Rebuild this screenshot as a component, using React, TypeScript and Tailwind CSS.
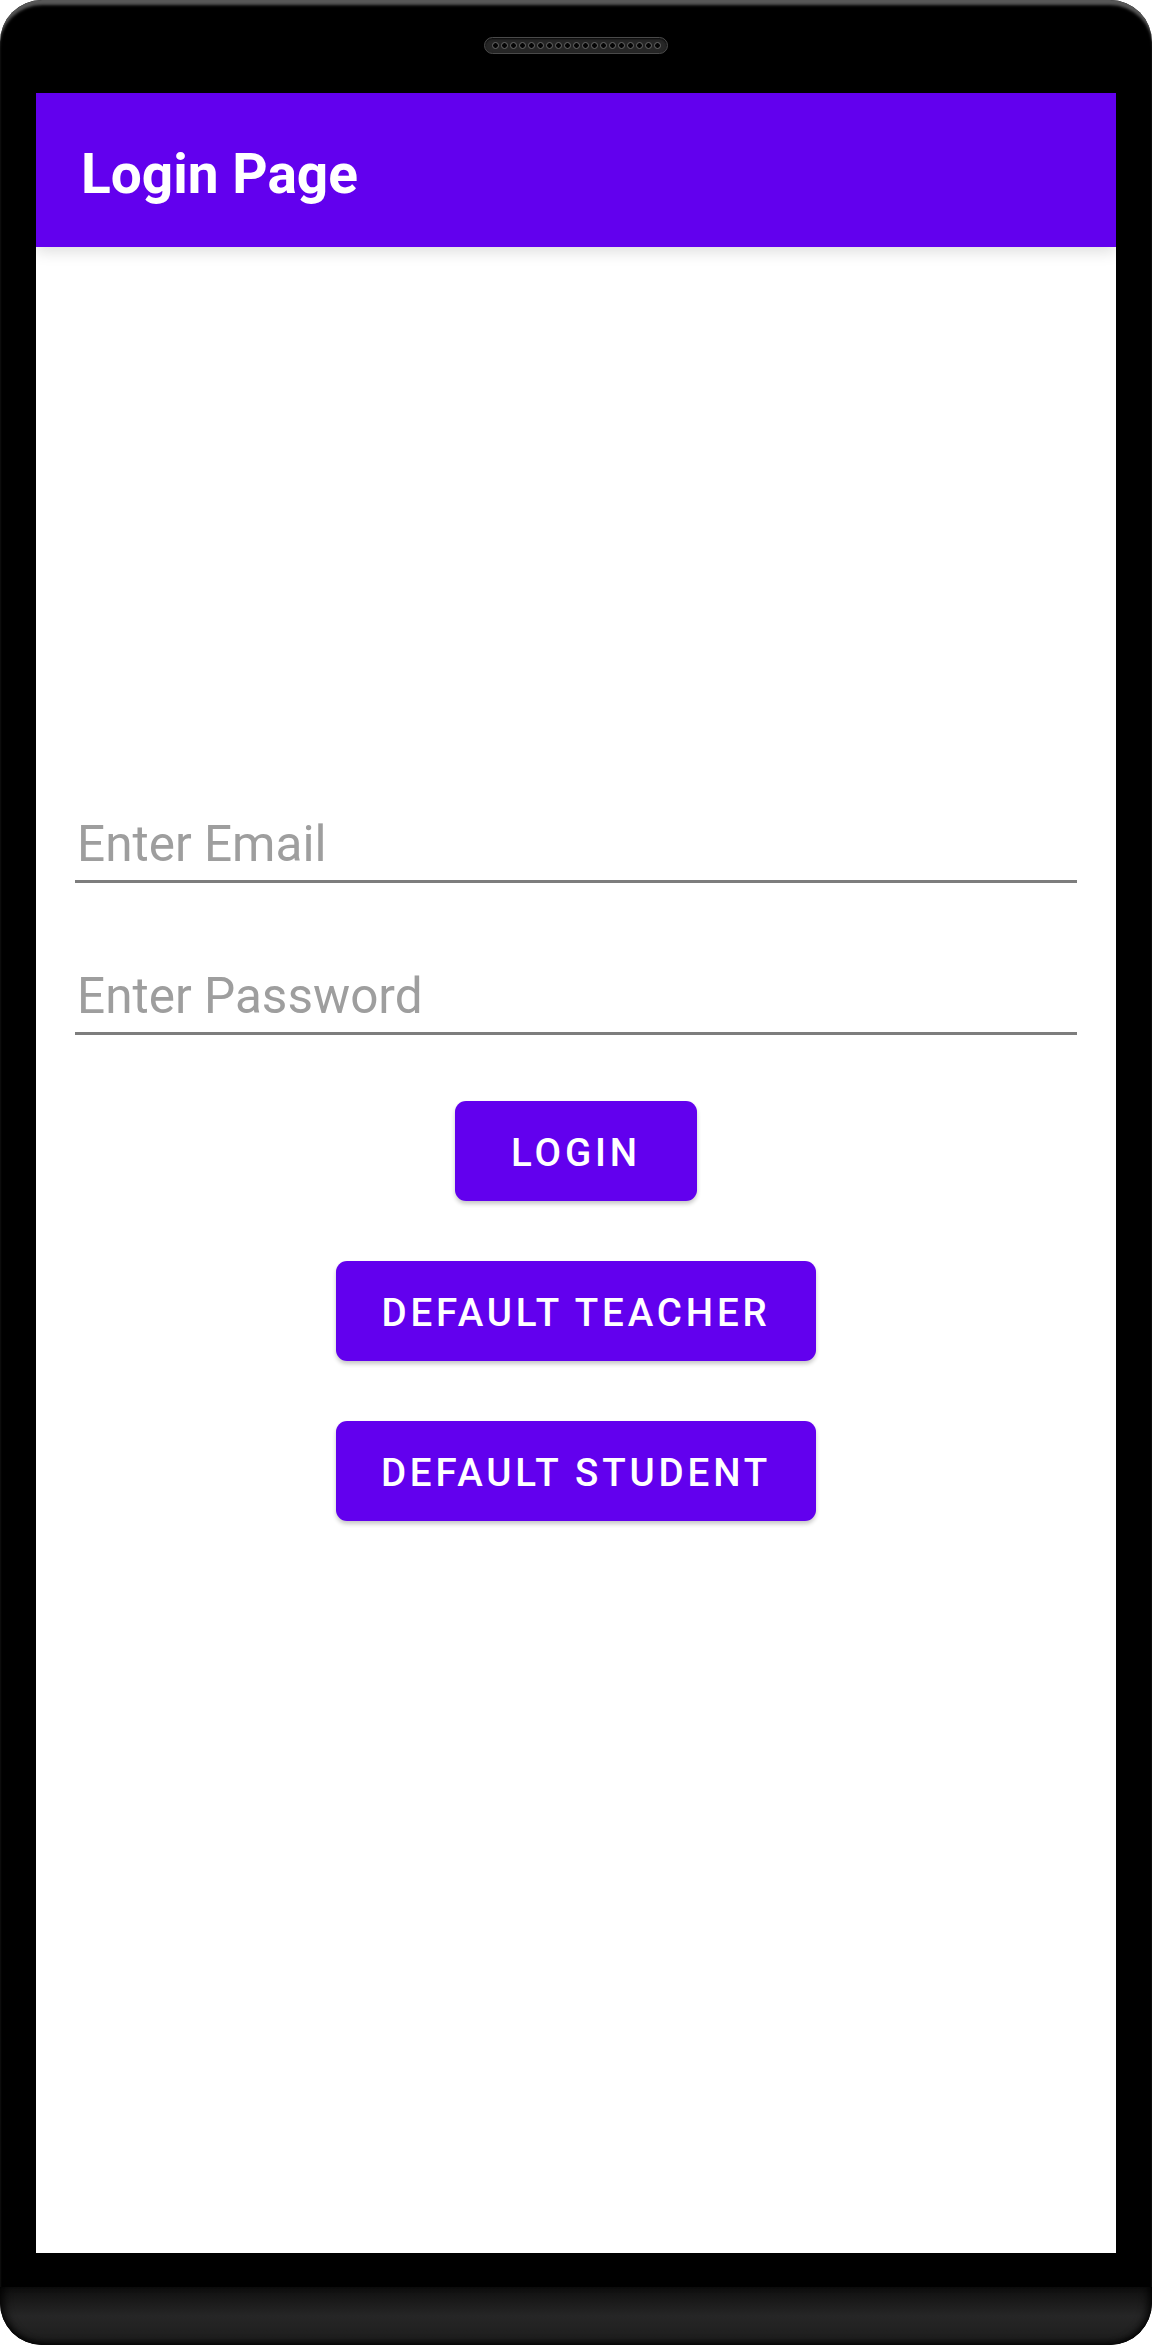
const holes = Array.from({ length: 19 }, (_, i) => i)

function Speaker() {
  return (
    <div className="flex items-center justify-center gap-[2px] w-[184px] h-[17px] rounded-full bg-[#262626] border border-[#4a4a4a] shadow-[inset_0_1px_2px_rgba(0,0,0,0.8)]">
      {holes.map((i) => (
        <div key={i} className="w-[7px] h-[7px] rounded-full bg-[#050505] border border-[#6a6a6a]" />
      ))}
    </div>
  )
}

function Field({ label }: { label: string }) {
  return (
    <div className="mx-[39px] pb-[7px] border-b-[3px] border-[#7d7d7d]">
      <div className="text-[49.5px] leading-[58px] text-[#9e9e9e] pl-[2px]">{label}</div>
    </div>
  )
}

function PurpleButton({ label }: { label: string }) {
  return (
    <button className="h-[100px] min-w-[242px] px-[45px] pt-[3px] rounded-[11px] bg-[#6200EE] text-white text-[38.5px] font-medium tracking-[0.1em] uppercase shadow-[0_3px_4px_rgba(0,0,0,0.22)]">
      {label}
    </button>
  )
}

export default function App() {
  return (
    <div className="w-[1152px] h-[2345px] bg-white" style={{ fontFamily: "Roboto, 'Noto Sans', sans-serif" }}>
      <div className="w-full h-full flex flex-col bg-black rounded-[42px] overflow-hidden shadow-[inset_0_6px_3px_-1px_#585858]">
        {/* top bezel */}
        <div className="h-[93px] flex justify-center pt-[37px]">
          <Speaker />
        </div>

        {/* screen */}
        <div className="mx-[36px] h-[2160px] bg-white flex flex-col">
          <div className="relative z-10 h-[154px] bg-[#6200EE] flex items-center px-[45px] pt-[8px] shadow-[0_5px_14px_rgba(0,0,0,0.13)]">
            <h1 className="text-[55px] font-bold text-white leading-none">Login Page</h1>
          </div>

          <div className="flex flex-col pt-[568px]">
            <Field label="Enter Email" />
            <div className="mt-[84px]">
              <Field label="Enter Password" />
            </div>
            <div className="mt-[66px] flex flex-col items-center gap-[60px]">
              <PurpleButton label="Login" />
              <PurpleButton label="Default Teacher" />
              <PurpleButton label="Default Student" />
            </div>
          </div>
        </div>

        {/* bottom bezel */}
        <div className="h-[34px]" />
        <div className="flex-1 rounded-b-[42px] bg-gradient-to-b from-[#0f0f0f] via-[#262626] to-[#1c1c1c] shadow-[inset_8px_0_8px_-4px_rgba(0,0,0,0.8),inset_-8px_0_8px_-4px_rgba(0,0,0,0.8),inset_0_-6px_6px_-3px_rgba(0,0,0,0.7)]" />
      </div>
    </div>
  )
}
